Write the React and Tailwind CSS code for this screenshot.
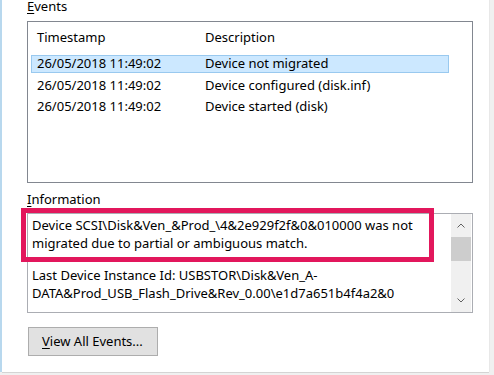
import React from "react";

const rows = [
  { time: "26/05/2018 11:49:02", desc: "Device not migrated", selected: true },
  { time: "26/05/2018 11:49:02", desc: "Device configured (disk.inf)" },
  { time: "26/05/2018 11:49:02", desc: "Device started (disk)" },
];

function Chevron({ up }) {
  return (
    <svg width="8" height="5" viewBox="0 0 8 5" fill="none">
      <path
        d={up ? "M0.5 4.5 L4 1 L7.5 4.5" : "M0.5 0.5 L4 4 L7.5 0.5"}
        stroke="#606060"
        strokeWidth="1"
      />
    </svg>
  );
}

export default function App() {
  return (
    <div className="relative w-[494px] h-[375px] bg-[#f0f0f0] flex overflow-hidden font-['Noto_Sans',sans-serif] text-[13px] text-black">
      <div className="w-[2px] h-[372px] bg-[#b8d8ee]" />

      <div className="w-[487px] h-[373px] bg-white border-b border-[#d4d4d4] pl-[25px] flex flex-col">
        {/* Events */}
        <div className="mt-[-3px] h-[18px] leading-[18px]">
          <span className="underline underline-offset-[2px]">E</span>vents
        </div>

        <div className="mt-[6px] w-[446px] h-[162px] border border-[#828790] flex flex-col">
          <div className="h-[31px] flex items-center pl-[9px] shrink-0">
            <span className="w-[168px]">Timestamp</span>
            <span>Description</span>
          </div>
          {rows.map((r, i) => (
            <div key={i} className="h-[21.5px] flex items-center pl-[3px] shrink-0">
              <div
                className={
                  "w-[418px] h-[18px] flex items-center pl-[5px] border " +
                  (r.selected
                    ? "bg-[#cce8ff] border-[#99c9ef]"
                    : "border-transparent")
                }
              >
                <span className="w-[168px] leading-none">{r.time}</span>
                <span className="leading-none">{r.desc}</span>
              </div>
            </div>
          ))}
        </div>

        {/* Information */}
        <div className="mt-[7px] h-[18px] leading-[18px]">
          <span className="underline underline-offset-[2px]">I</span>nformation
        </div>

        <div className="mt-[5px] w-[446px] h-[100px] border border-[#abadb3] flex">
          <div className="flex-1 pl-[4px] pt-[2px] leading-[18px] whitespace-nowrap">
            <p>
              Device SCSI\Disk&amp;Ven_&amp;Prod_\4&amp;2e929f2f&amp;0&amp;010000 was not
              <br />
              migrated due to partial or ambiguous match.
            </p>
            <p className="mt-[14px]">
              Last Device Instance Id: USBSTOR\Disk&amp;Ven_A-
              <br />
              DATA&amp;Prod_USB_Flash_Drive&amp;Rev_0.00\e1d7a651b4f4a2&amp;0
            </p>
          </div>
          <div className="w-[20px] mr-[1px] bg-[#f0f0f0] flex flex-col items-center">
            <div className="h-[23px] w-full flex items-center justify-center">
              <Chevron up />
            </div>
            <div className="w-full h-[24px] bg-[#cdcdcd]" />
            <div className="flex-1" />
            <div className="h-[23px] w-full flex items-center justify-center">
              <Chevron />
            </div>
          </div>
        </div>

        <button className="mt-[14px] ml-[1px] w-[130px] h-[29px] bg-[#e1e1e1] border border-[#adadad] text-left pl-[13px] leading-none">
          <span className="underline underline-offset-[2px]">V</span>iew All Events...
        </button>
      </div>

      <div className="flex-1 h-[372px] bg-[#f0f0f0] border-l border-[#e8e8e8]" />

      {/* highlight annotation */}
      <div className="absolute left-[21px] top-[208px] w-[413px] h-[54px] border-[5px] border-[#e2175c] pointer-events-none" />
    </div>
  );
}
